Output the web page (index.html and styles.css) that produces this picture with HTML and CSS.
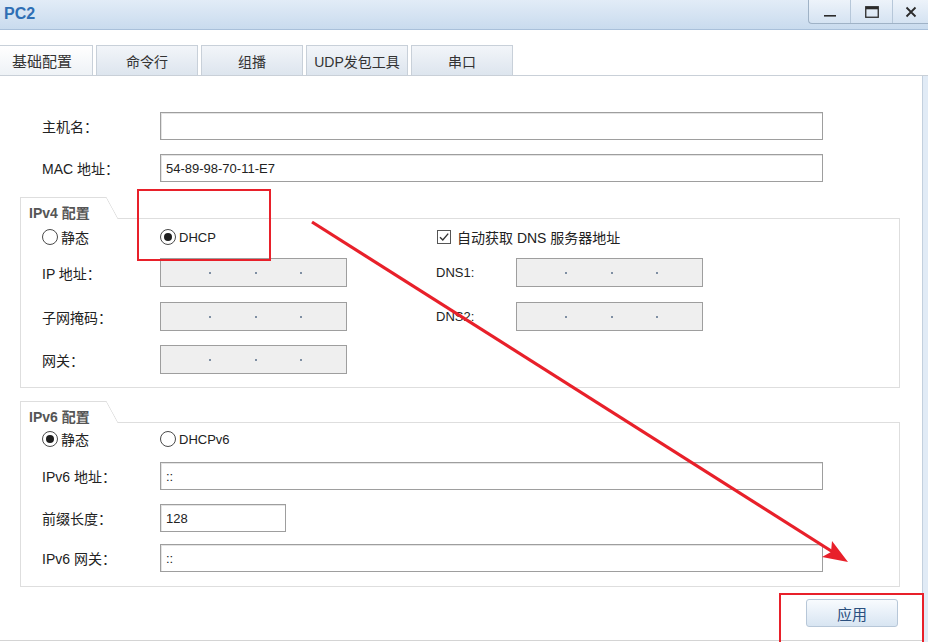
FILE: index.html
```html
<!DOCTYPE html>
<html lang="zh-CN">
<head>
<meta charset="utf-8">
<title>PC2</title>
<link rel="stylesheet" href="styles.css">
</head>
<body>
<div class="window">
  <div class="titlebar">
    <span class="title">PC2</span>
    <div class="winbtns">
      <div class="wb wb-min"><svg width="14" height="14" viewBox="0 0 14 14"><rect x="1" y="10" width="12" height="1.6" fill="#2b2b2b"/></svg></div>
      <div class="wb wb-max"><svg width="14" height="12" viewBox="0 0 14 12"><rect x="0.75" y="0.75" width="12.5" height="10.5" fill="none" stroke="#2b2b2b" stroke-width="1.3"/><rect x="1" y="1" width="12" height="2.3" fill="#2b2b2b"/></svg></div>
      <div class="wb wb-close"><svg width="12" height="12" viewBox="0 0 12 12"><path d="M1.5 1.5 L10.5 10.5 M10.5 1.5 L1.5 10.5" stroke="#2b2b2b" stroke-width="1.8"/></svg></div>
    </div>
  </div>

  <div class="tabbar">
    <div class="tab tab-first active">基础配置</div>
    <div class="tab">命令行</div>
    <div class="tab">组播</div>
    <div class="tab">UDP发包工具</div>
    <div class="tab">串口</div>
  </div>

  <div class="main">
    <div class="panel">
      <div class="row">
        <span class="lbl">主机名：</span>
        <div class="inp wide"></div>
      </div>
      <div class="row row-mac">
        <span class="lbl">MAC 地址：</span>
        <div class="inp wide"><span class="val">54-89-98-70-11-E7</span></div>
      </div>

      <div class="group group-v4">
        <div class="ghead">
          <div class="gtitle">IPv4 配置</div>
          <div class="gslant"></div>
          <div class="grest"></div>
        </div>
        <div class="gbody grid4">
          <label class="radio"><span class="rc"></span><span class="zh">静态</span></label>
          <label class="radio"><span class="rc on"></span><span>DHCP</span></label>
          <span></span>
          <label class="check span2"><span class="cb"><svg width="12" height="12" viewBox="0 0 12 12"><path d="M2 6.2 L4.8 9 L10.2 2.6" fill="none" stroke="#333" stroke-width="1.4"/></svg></span><span>自动获取 DNS 服务器地址</span></label>

          <span class="lbl r1">IP 地址：</span>
          <div class="inp ip r1"><i></i><b></b><i></i><b></b><i></i><b></b><i></i></div>
          <span class="r1"></span>
          <span class="lbl lbl-en r1">DNS1:</span>
          <div class="inp ip r1"><i></i><b></b><i></i><b></b><i></i><b></b><i></i></div>

          <span class="lbl r2">子网掩码：</span>
          <div class="inp ip r2"><i></i><b></b><i></i><b></b><i></i><b></b><i></i></div>
          <span class="r2"></span>
          <span class="lbl lbl-en r2">DNS2:</span>
          <div class="inp ip r2"><i></i><b></b><i></i><b></b><i></i><b></b><i></i></div>

          <span class="lbl r3">网关：</span>
          <div class="inp ip r3"><i></i><b></b><i></i><b></b><i></i><b></b><i></i></div>
        </div>
      </div>

      <div class="group group-v6">
        <div class="ghead">
          <div class="gtitle">IPv6 配置</div>
          <div class="gslant"></div>
          <div class="grest"></div>
        </div>
        <div class="gbody grid2">
          <label class="radio"><span class="rc on"></span><span class="zh">静态</span></label>
          <label class="radio"><span class="rc"></span><span>DHCPv6</span></label>

          <span class="lbl s1">IPv6 地址：</span>
          <div class="inp wide s1"><span class="val">::</span></div>

          <span class="lbl s2">前缀长度：</span>
          <div class="inp short s2"><span class="val">128</span></div>

          <span class="lbl s3">IPv6 网关：</span>
          <div class="inp wide s3"><span class="val">::</span></div>
        </div>
      </div>

      <div class="actions">
        <button class="btn">应用</button>
      </div>
    </div>
    <div class="frame-right"></div>
  </div>
</div>

<div class="mark mark-dhcp"></div>
<div class="mark mark-apply"></div>
<svg class="arrow" width="928" height="642" viewBox="0 0 928 642">
  <line x1="312" y1="222" x2="836" y2="554" stroke="#e8202a" stroke-width="3.2"/>
  <polygon points="848,562 832,541 831,552 822,557" fill="#e8202a"/>
</svg>
</body>
</html>
```

FILE: styles.css
```css
* { box-sizing: border-box; margin: 0; padding: 0; }
html, body { width: 928px; height: 642px; overflow: hidden; }
body {
  position: relative;
  font-family: "Liberation Sans", "Noto Sans CJK SC", sans-serif;
  font-size: 13px;
  color: #222;
  background: #fff;
}

/* title bar */
.titlebar {
  height: 30px;
  display: flex;
  justify-content: space-between;
  align-items: flex-start;
  background: linear-gradient(#e2ecf7, #c9dbee);
  border-bottom: 1px solid #a9c0da;
}
.title {
  padding: 5px 0 0 4px;
  font-size: 16px;
  font-weight: bold;
  color: #2f6fb4;
}
.winbtns {
  display: flex;
  height: 24px;
  margin-left: auto;
  border: 1px solid #9fb2c6;
  border-top: none;
  border-right: none;
  border-radius: 0 0 0 4px;
  background: linear-gradient(#edf3fa, #d5e3f2);
}
.wb {
  width: 41px;
  display: flex;
  align-items: center;
  justify-content: center;
  border-left: 1px solid #b6c7d9;
}
.wb:first-child { border-left: none; }
.wb-max { width: 42px; }
.wb-close { width: 36px; }

/* tabs */
.tabbar {
  height: 46px;
  padding-top: 15px;
  display: flex;
  gap: 3px;
  border-bottom: 1px solid #c9d0d8;
}
.tab {
  width: 102px;
  height: 30px;
  flex: none;
  display: flex;
  align-items: center;
  justify-content: center;
  font-size: 14px;
  color: #333;
  border: 1px solid #c8d0d9;
  border-bottom: none;
  background: linear-gradient(#f2f5f9, #dde5ee);
}
.tab-first { margin-left: -9px; font-size: 15px; }
.tab.active { background: linear-gradient(#ffffff, #eef2f6); }

/* main area */
.main { display: flex; }
.panel {
  width: 923px;
  height: 565px;
  padding-top: 36px;
  border-right: 1px solid #c3d0de;
  border-bottom: 1px solid #d4d4d4;
}
.frame-right {
  flex: 1;
  height: 566px;
  background: #e1ebf6;
}

.row {
  display: flex;
  align-items: center;
  padding-left: 42px;
}
.row-mac { margin-top: 14px; }
.lbl { width: 118px; white-space: nowrap; font-size: 14px; }
.lbl-en { font-size: 13px; }

.inp {
  height: 28px;
  display: flex;
  align-items: center;
  background: #fff;
  border: 1px solid #9e9e9e;
  box-shadow: inset 1px 1px 0 #e4e4e4;
  font-size: 13px;
}
.inp .val { padding-left: 5px; }
.inp.wide { width: 663px; }
.inp.short { width: 126px; }
.inp.ip {
  width: 187px;
  height: 29px;
  padding-left: 4px;
  background: #efefef;
  box-shadow: none;
}
.inp.ip i { width: 44px; }
.inp.ip b {
  width: 2px;
  height: 2px;
  background: #7f8fa3;
}

/* groups */
.group { margin: 15px 22px 0 20px; }
.group-v6 { margin-top: 13px; }
.ghead { display: flex; height: 22px; }
.gtitle {
  width: 86px;
  padding: 4px 0 0 8px;
  border-top: 1px solid #dedede;
  border-left: 1px solid #dedede;
  font-weight: bold;
  color: #555;
  font-size: 14px;
  white-space: nowrap;
}
.gslant {
  width: 12px;
  background: linear-gradient(to top right, transparent calc(50% - 0.7px), #dedede 50%, transparent calc(50% + 0.7px));
}
.grest { flex: 1; border-bottom: 1px solid #dedede; }
.gbody {
  border: 1px solid #dedede;
  border-top: none;
  padding-left: 21px;
}

.grid4 {
  display: grid;
  grid-template-columns: 118px 187px 89px 80px 187px;
  align-items: center;
  padding-top: 10px;
  padding-bottom: 13px;
}
.grid4 .r1 { margin-top: 13px; }
.grid4 .r2 { margin-top: 15px; }
.grid4 .r3 { margin-top: 14px; }

.grid2 {
  display: grid;
  grid-template-columns: 118px auto;
  justify-items: start;
  align-items: center;
  padding-top: 8px;
  padding-bottom: 14px;
}
.grid2 .s1 { margin-top: 15px; }
.grid2 .s2 { margin-top: 14px; }
.grid2 .s3 { margin-top: 12px; }

.span2 { grid-column: span 2; }

.radio, .check {
  display: flex;
  align-items: center;
  gap: 3px;
  height: 16px;
  font-size: 13px;
}
.radio .zh { font-size: 14px; }
.rc {
  width: 16px;
  height: 16px;
  flex: none;
  border: 1.5px solid #4a4a4a;
  border-radius: 50%;
  background: #fff;
  display: flex;
  align-items: center;
  justify-content: center;
}
.rc.on::after {
  content: "";
  width: 8px;
  height: 8px;
  border-radius: 50%;
  background: #1e1e1e;
}
.cb {
  width: 14px;
  height: 14px;
  flex: none;
  border: 1px solid #555;
  background: #fff;
  display: flex;
  align-items: center;
  justify-content: center;
}
.check { gap: 6px; font-size: 14px; margin-left: 1px; }

/* actions */
.actions {
  display: flex;
  justify-content: flex-end;
  padding-right: 24px;
  margin-top: 12px;
}
.btn {
  width: 92px;
  height: 28px;
  font-family: "Liberation Sans", "Noto Sans CJK SC", sans-serif;
  font-size: 15px;
  color: #2a4f7e;
  border: 1px solid #b7c7d8;
  border-radius: 3px;
  background: linear-gradient(#f8fbfe, #d8e5f2);
}

/* annotations drawn over the screenshot */
.mark {
  position: absolute;
  border: 2px solid #e8202a;
}
.mark-dhcp { left: 137px; top: 189px; width: 134px; height: 72px; }
.mark-apply { left: 779px; top: 593px; width: 145px; height: 60px; }
.arrow { position: absolute; left: 0; top: 0; pointer-events: none; }
```
